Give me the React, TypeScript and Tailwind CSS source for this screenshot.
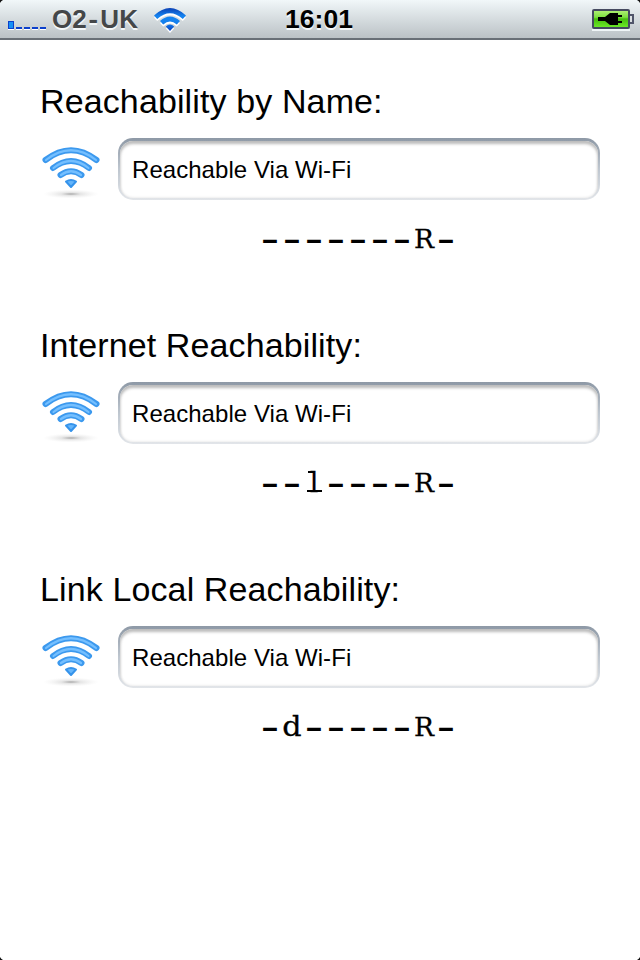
import React from "react";

function Glyph({ c }: { c: string }) {
  if (c === "-") {
    return (
      <span className="inline-block w-[22px] text-center">
        <span className="relative top-[4px] inline-block scale-x-[1.5] scale-y-[0.75] font-['Liberation_Sans',sans-serif] text-[36px] font-bold">{c}</span>
      </span>
    );
  }
  if (c === "l") {
    return (
      <span className="relative inline-block w-[22px] text-center font-['DejaVu_Serif',serif] text-[27px] [-webkit-text-stroke:0.3px_black] before:absolute before:left-[5px] before:top-[8px] before:h-[2px] before:w-[6px] before:bg-black after:absolute after:bottom-[11px] after:left-[4px] after:h-[2px] after:w-[15px] after:bg-black">
        {c}
      </span>
    );
  }
  if (c === "d") {
    return <span className="inline-block w-[22px] scale-x-[1.12] text-center font-['DejaVu_Serif',serif] text-[27px] [-webkit-text-stroke:0.3px_black]">{c}</span>;
  }
  return <span className="inline-block w-[22px] text-center font-['DejaVu_Serif',serif] text-[26.5px] [-webkit-text-stroke:0.3px_black]">{c}</span>;
}

function WifiBadge({ id }: { id: string }) {
  return (
    <svg width="60" height="60" viewBox="0 0 60 60" className="shrink-0">
      <defs>
        <radialGradient id={id}>
          <stop offset="0" stopColor="#777" stopOpacity="0.65" />
          <stop offset="0.35" stopColor="#999" stopOpacity="0.25" />
          <stop offset="1" stopColor="#ccc" stopOpacity="0" />
        </radialGradient>
      </defs>
      <ellipse cx="31" cy="56" rx="28" ry="4.5" fill={`url(#${id})`} />
      <g fill="none" stroke="#3c99ee" strokeWidth="6" strokeLinecap="round">
        <path d="M5.5 22Q31 2.5 56.5 22" />
        <path d="M13 30Q31 16 49 30" />
        <path d="M20.5 37Q31 29.5 41.5 37" />
      </g>
      <g fill="none" stroke="#74bfff" strokeWidth="2.2" strokeLinecap="round">
        <path d="M6 22Q31 2.5 56 22" />
        <path d="M13.5 30Q31 16 48.5 30" />
        <path d="M21 37Q31 29.5 41 37" />
      </g>
      <path d="M26 43.5Q31 40.5 36 43.5L31 49Z" fill="#64b5fb" stroke="#3593eb" strokeWidth="2" strokeLinejoin="round" />
    </svg>
  );
}

function Section({ id, title, flags }: { id: string; title: string; flags: string }) {
  return (
    <section className="h-[244px] px-10">
      <h2 className="flex h-[46px] items-center whitespace-nowrap text-[34px] leading-[46px] tracking-[0.12px]">{title}</h2>
      <div className="mt-[14px] flex h-[62px] gap-[18px]">
        <WifiBadge id={id} />
        <div className="h-[62px] flex-1 rounded-[15px] bg-gradient-to-b from-[#8e99a6] via-[#bec6cf] to-[#e2e5e9] px-[2px] pb-[2px] pt-[3px]">
          <div className="flex h-full items-center rounded-[13px] bg-white pl-[12px] pt-[1px] text-[24px] tracking-[0.05px] shadow-[inset_0_3px_3px_#bcbcbc,inset_0_0_3px_#ddd]">
            Reachable Via Wi-Fi
          </div>
        </div>
      </div>
      <p className="mt-[16px] h-10 whitespace-nowrap pl-[219px] leading-10">
        {flags.split("").map((c, i) => (
          <Glyph key={i} c={c} />
        ))}
      </p>
    </section>
  );
}

export default function App() {
  return (
    <div className="relative h-[960px] w-[640px] overflow-hidden bg-white font-['Liberation_Sans',Arial,sans-serif] text-black">
      <header className="grid h-10 grid-cols-3 items-center border-b-2 border-[#697077] bg-gradient-to-b from-[#f1f7f9] to-[#bbc2c6] [text-shadow:0_2px_0_#f4f8fa]">
        <div className="flex items-center pl-2">
          <svg width="38" height="10" viewBox="0 0 38 10" className="mt-[11px]">
            <path d="M0 9h6v1H0zM8 9h6v1H8zM16 9h6v1h-6zM24 9h6v1h-6zM32 9h6v1h-6z" fill="#fff" />
            <path d="M0 1h6v8H0zM8 7h6v2H8zM16 7h6v2h-6zM24 7h6v2h-6zM32 7h6v2h-6z" fill="#0b40cc" />
            <path d="M1 2h4v6H1z" fill="#1690f5" />
          </svg>
          <span className="ml-[6px] w-[86px] whitespace-nowrap text-[26px] font-bold leading-[38px] text-[#444749]">
            O2<span className="mx-[2.5px] inline-block scale-x-110">-</span>UK
          </span>
          <svg width="34" height="26" viewBox="0 0 34 26" className="ml-[15px] mt-[4px] shrink-0">
            <defs>
              <linearGradient id="status" x1="0" y1="0" x2="0" y2="1">
                <stop offset="0" stopColor="#0a3fb4" />
                <stop offset="0.35" stopColor="#1584f0" />
                <stop offset="0.65" stopColor="#1480ee" />
                <stop offset="1" stopColor="#0a44c4" />
              </linearGradient>
            </defs>
            <path transform="translate(0 2)" d="M1 7.5Q17 -7.5 33 7.5L29.8 11Q17 -.5 4.2 11ZM7 13Q17 4 27 13L23.8 16.5Q17 10.5 10.2 16.5ZM12.8 18.5Q17 14.5 21.2 18.5L17 23Z" fill="#fff" />
            <path d="M1 7.5Q17 -7.5 33 7.5L29.8 11Q17 -.5 4.2 11ZM7 13Q17 4 27 13L23.8 16.5Q17 10.5 10.2 16.5ZM12.8 18.5Q17 14.5 21.2 18.5L17 23Z" fill="url(#status)" />
          </svg>
        </div>
        <div className="pr-[2px] text-center text-[26.5px] font-bold leading-[38px]">16:01</div>
        <div className="flex justify-end pr-[6px]">
          <svg width="42" height="23" viewBox="0 0 42 23">
            <defs>
              <linearGradient id="cell" x1="0" y1="0" x2="0" y2="1">
                <stop offset="0" stopColor="#b4f078" />
                <stop offset="0.4" stopColor="#7de040" />
                <stop offset="0.5" stopColor="#45bd0c" />
                <stop offset="1" stopColor="#70ee2b" />
              </linearGradient>
            </defs>
            <path d="M0 21h38v2H0z" fill="#eff5f7" />
            <path d="M38 7h3v8h-3" fill="#dbe0e2" stroke="#50556a" strokeWidth="2" />
            <rect x="1" y="2" width="36" height="18" rx="1" fill="url(#cell)" stroke="#454a60" strokeWidth="2" />
            <path d="M6 9h7l5-4h8v2h4v2h-4v4h4v2h-4v2h-8l-5-4H6z" fill="#000" />
          </svg>
        </div>
      </header>
      <main className="pt-[38px]">
        <Section id="name" title="Reachability by Name:" flags="-------R-" />
        <Section id="internet" title="Internet Reachability:" flags="--l----R-" />
        <Section id="local" title="Link Local Reachability:" flags="-d-----R-" />
      </main>
      <svg width="640" height="960" viewBox="0 0 640 960" className="pointer-events-none absolute inset-0">
        <path d="M0 0h3Q1 1 0 3ZM640 0h-3Q639 1 640 3ZM0 960h3Q1 959 0 957ZM640 960h-3Q639 959 640 957Z" fill="#111" />
      </svg>
    </div>
  );
}
